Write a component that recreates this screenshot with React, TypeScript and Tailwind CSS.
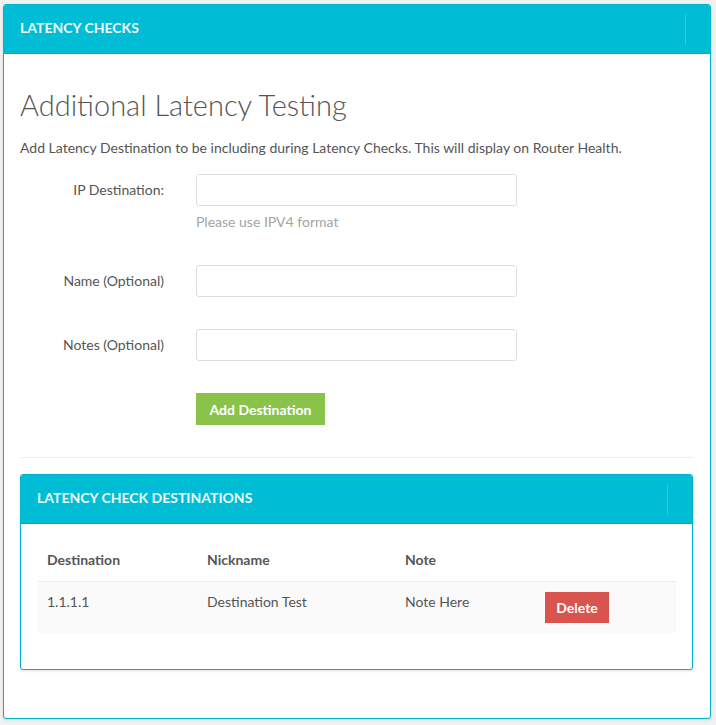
const font = { fontFamily: 'Lato, "Open Sans", sans-serif' }

function PanelHeader({ title }: { title: string }) {
  return (
    <div className="flex h-[49px] items-center justify-between bg-[#00bcd4] border-b border-[#00acc1]">
      <h2 className="-mt-[3px] pl-4 text-[14px] font-bold uppercase text-[#eefbfd]">{title}</h2>
      <span className="mr-6 h-[31px] w-px bg-white/20" />
    </div>
  )
}

function FormRow({ label, help }: { label: string; help?: string }) {
  return (
    <div className="flex">
      <label className="w-[144px] pt-[6px] text-right text-[14px] leading-5 text-[#555]">{label}</label>
      <div className="ml-8">
        <input className="block h-[32px] w-[321px] rounded-[3px] border border-[#ddd] bg-white px-3 text-[14px] outline-none" />
        {help && <p className="mt-[6px] text-[14px] leading-5 text-[#a4a4a4]">{help}</p>}
      </div>
    </div>
  )
}

export default function App() {
  return (
    <div className="min-h-[725px] bg-[#f1f1f1] pl-[3px] pr-[5px] pt-1 pb-[5px]" style={font}>
      <section className="overflow-hidden rounded-[3px] border border-[#00b4cb] bg-white shadow-sm">
        <PanelHeader title="Latency Checks" />

        <div className="pl-4 pr-[17px] pb-12">
          <h1 className="mt-[35px] text-[29px] font-light leading-8 text-[#555]">Additional Latency Testing</h1>
          <p className="mt-[17px] text-[14px] leading-5 text-[#555]">
            Add Latency Destination to be including during Latency Checks. This will display on Router Health.
          </p>

          <div className="mt-4">
            <FormRow label="IP Destination:" help="Please use IPV4 format" />
          </div>
          <div className="mt-[33px]">
            <FormRow label="Name (Optional)" />
          </div>
          <div className="mt-8">
            <FormRow label="Notes (Optional)" />
          </div>

          <div className="mt-8 pl-[176px]">
            <button className="h-[32px] w-[129px] bg-[#8bc34a] text-[14px] font-bold text-white">Add Destination</button>
          </div>

          <hr className="mt-8 border-t border-[#eee]" />

          <section className="mt-4 overflow-hidden rounded-[3px] border border-[#00b4cb] bg-white shadow-sm">
            <PanelHeader title="Latency Check Destinations" />
            <div className="px-4 pt-4 pb-9">
              <table className="w-full text-left text-[14px] text-[#555]">
                <thead>
                  <tr className="border-b border-[#eee]">
                    <th className="w-[160px] px-[10px] pt-[9px] pb-[11px] font-bold leading-[21px]">Destination</th>
                    <th className="w-[198px] px-[10px] pt-[9px] pb-[11px] font-bold">Nickname</th>
                    <th className="w-[140px] px-[10px] pt-[9px] pb-[11px] font-bold">Note</th>
                    <th className="px-[10px] py-[10px]" />
                  </tr>
                </thead>
                <tbody>
                  <tr className="bg-[#fafafa] align-top">
                    <td className="px-[10px] py-[10px] leading-5">1.1.1.1</td>
                    <td className="px-[10px] py-[10px] leading-5">Destination Test</td>
                    <td className="px-[10px] py-[10px] leading-5">Note Here</td>
                    <td className="px-[10px] py-[10px]">
                      <button className="h-[31px] w-[64px] bg-[#d9534f] text-[14px] font-bold text-white">Delete</button>
                    </td>
                  </tr>
                </tbody>
              </table>
            </div>
          </section>
        </div>
      </section>
    </div>
  )
}
